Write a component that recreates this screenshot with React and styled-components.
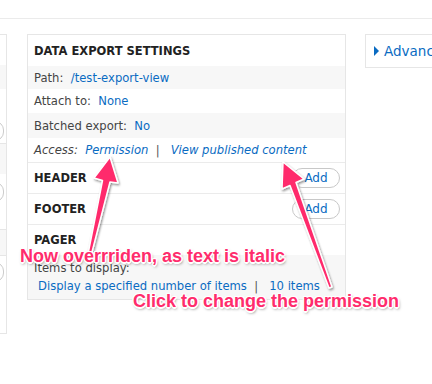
import React from "react";
import styled, { createGlobalStyle } from "styled-components";

const GlobalStyle = createGlobalStyle`
  html, body {
    margin: 0;
    padding: 0;
    background: #fff;
    font-family: "DejaVu Sans", "Liberation Sans", sans-serif;
    color: #333;
  }
`;

const Page = styled.div`
  position: relative;
  width: 432px;
  height: 384px;
  overflow: hidden;
`;

const TopBar = styled.div`
  height: 18px;
  border-bottom: 1px solid #ebebeb;
`;

const Columns = styled.div`
  display: flex;
  align-items: flex-start;
  padding-top: 15px;
  height: 322px;
`;

const SidePanel = styled.div`
  flex-shrink: 0;
  width: 6px;
  height: 298px;
  border: 1px solid #e6e6e6;
  border-left: none;
  display: flex;
  flex-direction: column;
  overflow: hidden;
`;

const SideRow = styled.div`
  height: ${(p) => p.h}px;
  background: ${(p) => (p.shade ? "#f7f7f7" : "#fff")};
  border-bottom: ${(p) => (p.line ? "1px solid #e6e6e6" : "none")};
  position: relative;
`;

const SideKnob = styled.span`
  position: absolute;
  left: -14px;
  top: ${(p) => p.top}px;
  width: 16px;
  height: 18px;
  border: 1px solid #ccc;
  border-radius: 10px;
`;

const Panel = styled.div`
  flex-shrink: 0;
  margin-left: 20px;
  width: 317px;
  border: 1px solid #e6e6e6;
  display: flex;
  flex-direction: column;
`;

const SectionTitle = styled.div`
  height: ${(p) => p.h || 30}px;
  display: flex;
  align-items: center;
  justify-content: space-between;
  padding: 0 5px 0 6px;
  font-size: 11.5px;
  font-weight: bold;
  color: #222;
  border-bottom: ${(p) => (p.line ? "1px solid #ebebeb" : "none")};
`;

const Row = styled.div`
  height: ${(p) => p.h}px;
  display: flex;
  align-items: center;
  padding-left: 6px;
  font-size: 11.6px;
  background: ${(p) => (p.shade ? "#f7f7f7" : "#fff")};
  font-style: ${(p) => (p.italic ? "italic" : "normal")};
  border-bottom: ${(p) => (p.line ? "1px solid #ebebeb" : "none")};
  white-space: pre;
`;

const Label = styled.span`
  color: #444;
`;

const Link = styled.span`
  color: #0a6bc2;
`;

const Sep = styled.span`
  color: #555;
`;

const AddButton = styled.button`
  width: 48px;
  height: 20px;
  border: 1px solid #c8c8c8;
  border-radius: 10px;
  background: #fff;
  color: #0a6bc2;
  font-family: inherit;
  font-size: 12px;
  padding: 0;
`;

const PagerBody = styled.div`
  background: #f7f7f7;
  height: 44px;
  display: flex;
  flex-direction: column;
  padding: 6px 0 0 6px;
  box-sizing: border-box;
  font-size: 11.6px;
`;

const PagerLine = styled.div`
  padding-left: ${(p) => p.indent || 0}px;
  height: ${(p) => p.h}px;
  display: flex;
  align-items: center;
  white-space: pre;
`;

const AsidePanel = styled.div`
  margin-left: 19px;
  flex: 1;
  min-width: 0;
  height: 32px;
  border: 1px solid #e6e6e6;
  border-right: none;
  display: flex;
  align-items: center;
  padding-left: 8px;
  gap: 5px;
  color: #0a6bc2;
  font-size: 13.5px;
  white-space: nowrap;
  overflow: hidden;
`;

const Triangle = styled.span`
  flex-shrink: 0;
  width: 0;
  height: 0;
  border-top: 5px solid transparent;
  border-bottom: 5px solid transparent;
  border-left: 5px solid #0a6bc2;
`;

const BottomRule = styled.div`
  margin-top: 31px;
  height: 3px;
  background: #cdcdcd;
`;

const Overlay = styled.svg`
  position: absolute;
  left: 0;
  top: 0;
  pointer-events: none;
`;

const Note = styled.div`
  position: absolute;
  left: ${(p) => p.x}px;
  top: ${(p) => p.y}px;
  font-family: "Liberation Sans", Arial, sans-serif;
  font-weight: bold;
  font-size: 18px;
  color: #ff2c6c;
  white-space: nowrap;
  text-shadow: -1px -1px 0 #fff, 1px -1px 0 #fff, -1px 1px 0 #fff,
    1px 1px 0 #fff, 0 -1.5px 0 #fff, 0 1.5px 0 #fff, -1.5px 0 0 #fff,
    1.5px 0 0 #fff, 1px 2px 3px rgba(0, 0, 0, 0.55);
`;

const Arrows = () => (
  <Overlay width="432" height="384" viewBox="0 0 432 384">
    <defs>
      <filter id="drop" x="-50%" y="-50%" width="200%" height="200%">
        <feDropShadow dx="1" dy="1.5" stdDeviation="1.2" floodColor="#000" floodOpacity="0.45" />
      </filter>
    </defs>
    <g fill="#ff2c6c" stroke="#fff" strokeWidth="1.5" strokeLinejoin="round" filter="url(#drop)">
      <polygon points="110,157 94,178 102.5,180.5 88,254 91.5,254 110,182 118,183" />
      <polygon points="283,162 282,189 290,185.5 329,288 332,287 296,182.5 304,179" />
    </g>
  </Overlay>
);

export default function App() {
  return (
    <Page>
      <GlobalStyle />
      <TopBar />
      <Columns>
        <SidePanel>
          <SideRow h={30} />
          <SideRow h={24} shade />
          <SideRow h={54} line>
            <SideKnob top={32} />
          </SideRow>
          <SideRow h={30} shade />
          <SideRow h={55} line>
            <SideKnob top={8} />
          </SideRow>
          <SideRow h={25} shade line />
          <SideRow h={55}>
            <SideKnob top={6} />
          </SideRow>
        </SidePanel>
        <Panel>
          <SectionTitle h={31}>DATA EXPORT SETTINGS</SectionTitle>
          <Row h={23} shade>
            <Label>Path:  </Label>
            <Link>/test-export-view</Link>
          </Row>
          <Row h={24}>
            <Label>Attach to:  </Label>
            <Link>None</Link>
          </Row>
          <Row h={25} shade>
            <Label>Batched export:  </Label>
            <Link>No</Link>
          </Row>
          <Row h={24} italic line>
            <Label>Access:  </Label>
            <Link>Permission</Link>
            <Sep>  |   </Sep>
            <Link>View published content</Link>
          </Row>
          <SectionTitle h={30} line>
            HEADER
            <AddButton>Add</AddButton>
          </SectionTitle>
          <SectionTitle h={30} line>
            FOOTER
            <AddButton>Add</AddButton>
          </SectionTitle>
          <SectionTitle h={30}>PAGER</SectionTitle>
          <PagerBody>
            <PagerLine h={14}>
              <Label>Items to display:</Label>
            </PagerLine>
            <PagerLine h={22} indent={4}>
              <Link>Display a specified number of items</Link>
              <Sep>  |   </Sep>
              <Link>10 items</Link>
            </PagerLine>
          </PagerBody>
        </Panel>
        <AsidePanel>
          <Triangle />
          Advanced
        </AsidePanel>
      </Columns>
      <BottomRule />
      <Arrows />
      <Note x={20} y={246}>Now overrriden, as text is italic</Note>
      <Note x={133} y={291}>Click to change the permission</Note>
    </Page>
  );
}
